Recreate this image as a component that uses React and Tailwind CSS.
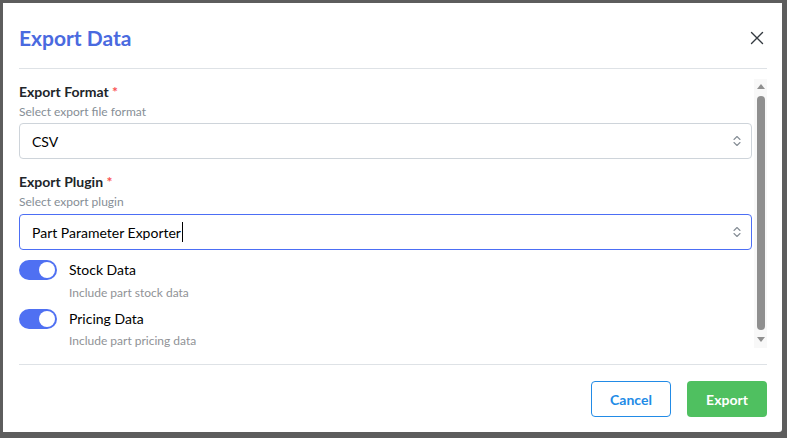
import React from "react";

function Selector() {
  return (
    <svg width="10" height="16" viewBox="0 0 10 16" fill="none" stroke="#868e96" strokeWidth="1.1" strokeLinecap="round" strokeLinejoin="round">
      <path d="M2 6.5 L5 3.5 L8 6.5" />
      <path d="M2 9.5 L5 12.5 L8 9.5" />
    </svg>
  );
}

function Toggle() {
  return (
    <div className="w-[38px] h-[20px] rounded-full bg-[#4f70f2] flex items-center justify-end pr-[2px] shrink-0">
      <div className="w-[16px] h-[16px] rounded-full bg-white" />
    </div>
  );
}

export default function App() {
  const font = { fontFamily: '"Lato", "Liberation Sans", sans-serif' };
  return (
    <div className="w-[787px] h-[438px] bg-[#5d5d5d] pt-[3px] pl-[3px] overflow-hidden" style={font}>
      <div className="w-[779px] h-[429px] bg-white rounded-br-[3px] pl-[16px] pr-[15px] flex flex-col">
        {/* header */}
        <div className="h-[66px] shrink-0 flex items-center justify-between border-b border-[#dee2e6] pt-[4px]">
          <div className="text-[21px] font-bold text-[#4a6adf] leading-none">Export Data</div>
          <svg width="14" height="14" viewBox="0 0 14 14" className="mr-[3px]" stroke="#343a40" strokeWidth="1.4" strokeLinecap="round">
            <path d="M1.5 1.5 L12.5 12.5 M12.5 1.5 L1.5 12.5" />
          </svg>
        </div>
        {/* body */}
        <div className="h-[296px] shrink-0 flex gap-[2px] overflow-hidden border-b border-[#dee2e6]">
          <div className="w-[733px] pt-[13px] flex flex-col">
            <div className="text-[14px] leading-[20px] font-bold text-[#212529]">
              Export Format <span className="text-[#fa5252]">*</span>
            </div>
            <div className="text-[12px] leading-[16px] text-[#868e96] mt-[2px]">Select export file format</div>
            <div className="mt-[3px] h-[36px] border border-[#ced4da] rounded-[4px] flex items-center justify-between pl-[12px] pr-[9px] text-[14px] text-[#000]">
              <span>CSV</span>
              <Selector />
            </div>
            <div className="text-[14px] leading-[20px] font-bold text-[#212529] mt-[13px]">
              Export Plugin <span className="text-[#fa5252]">*</span>
            </div>
            <div className="text-[12px] leading-[16px] text-[#868e96] mt-[2px]">Select export plugin</div>
            <div className="mt-[4px] h-[36px] border border-[#4c6ef5] rounded-[4px] flex items-center justify-between pl-[12px] pr-[9px] text-[14px] text-[#000]">
              <span className="flex items-center">
                Part Parameter Exporter
                <span className="inline-block w-px h-[20px] bg-black ml-px" />
              </span>
              <Selector />
            </div>
            <div className="mt-[10px] flex gap-[12px]">
              <Toggle />
              <div className="flex flex-col">
                <div className="text-[14px] leading-[20px] text-[#000]">Stock Data</div>
                <div className="text-[12px] leading-[16px] text-[#909296] mt-[5px]">Include part stock data</div>
              </div>
            </div>
            <div className="mt-[8px] flex gap-[12px]">
              <Toggle />
              <div className="flex flex-col">
                <div className="text-[14px] leading-[20px] text-[#000]">Pricing Data</div>
                <div className="text-[12px] leading-[16px] text-[#909296] mt-[4px]">Include part pricing data</div>
              </div>
            </div>
          </div>
          {/* scrollbar */}
          <div className="w-[13px] mt-[10px] h-[269px] bg-[#f8f8f8] flex flex-col items-center">
            <svg width="10" height="8" viewBox="0 0 10 8" className="mt-[3px]">
              <path d="M1 7 L5 2 L9 7 Z" fill="#8f8f8f" />
            </svg>
            <div className="w-[8px] flex-1 rounded-full bg-[#8f8f8f] my-[6px]" />
            <svg width="10" height="8" viewBox="0 0 10 8" className="mb-[4px]">
              <path d="M1 1 L5 6 L9 1 Z" fill="#8f8f8f" />
            </svg>
          </div>
        </div>
        {/* footer */}
        <div className="flex justify-end gap-[16px] pt-[16px]">
          <div className="w-[80px] h-[36px] border border-[#228be6] rounded-[4px] flex items-center justify-center text-[14px] font-bold text-[#228be6]">
            Cancel
          </div>
          <div className="w-[80px] h-[36px] bg-[#4fc060] rounded-[4px] flex items-center justify-center text-[14px] font-bold text-white">
            Export
          </div>
        </div>
      </div>
    </div>
  );
}
